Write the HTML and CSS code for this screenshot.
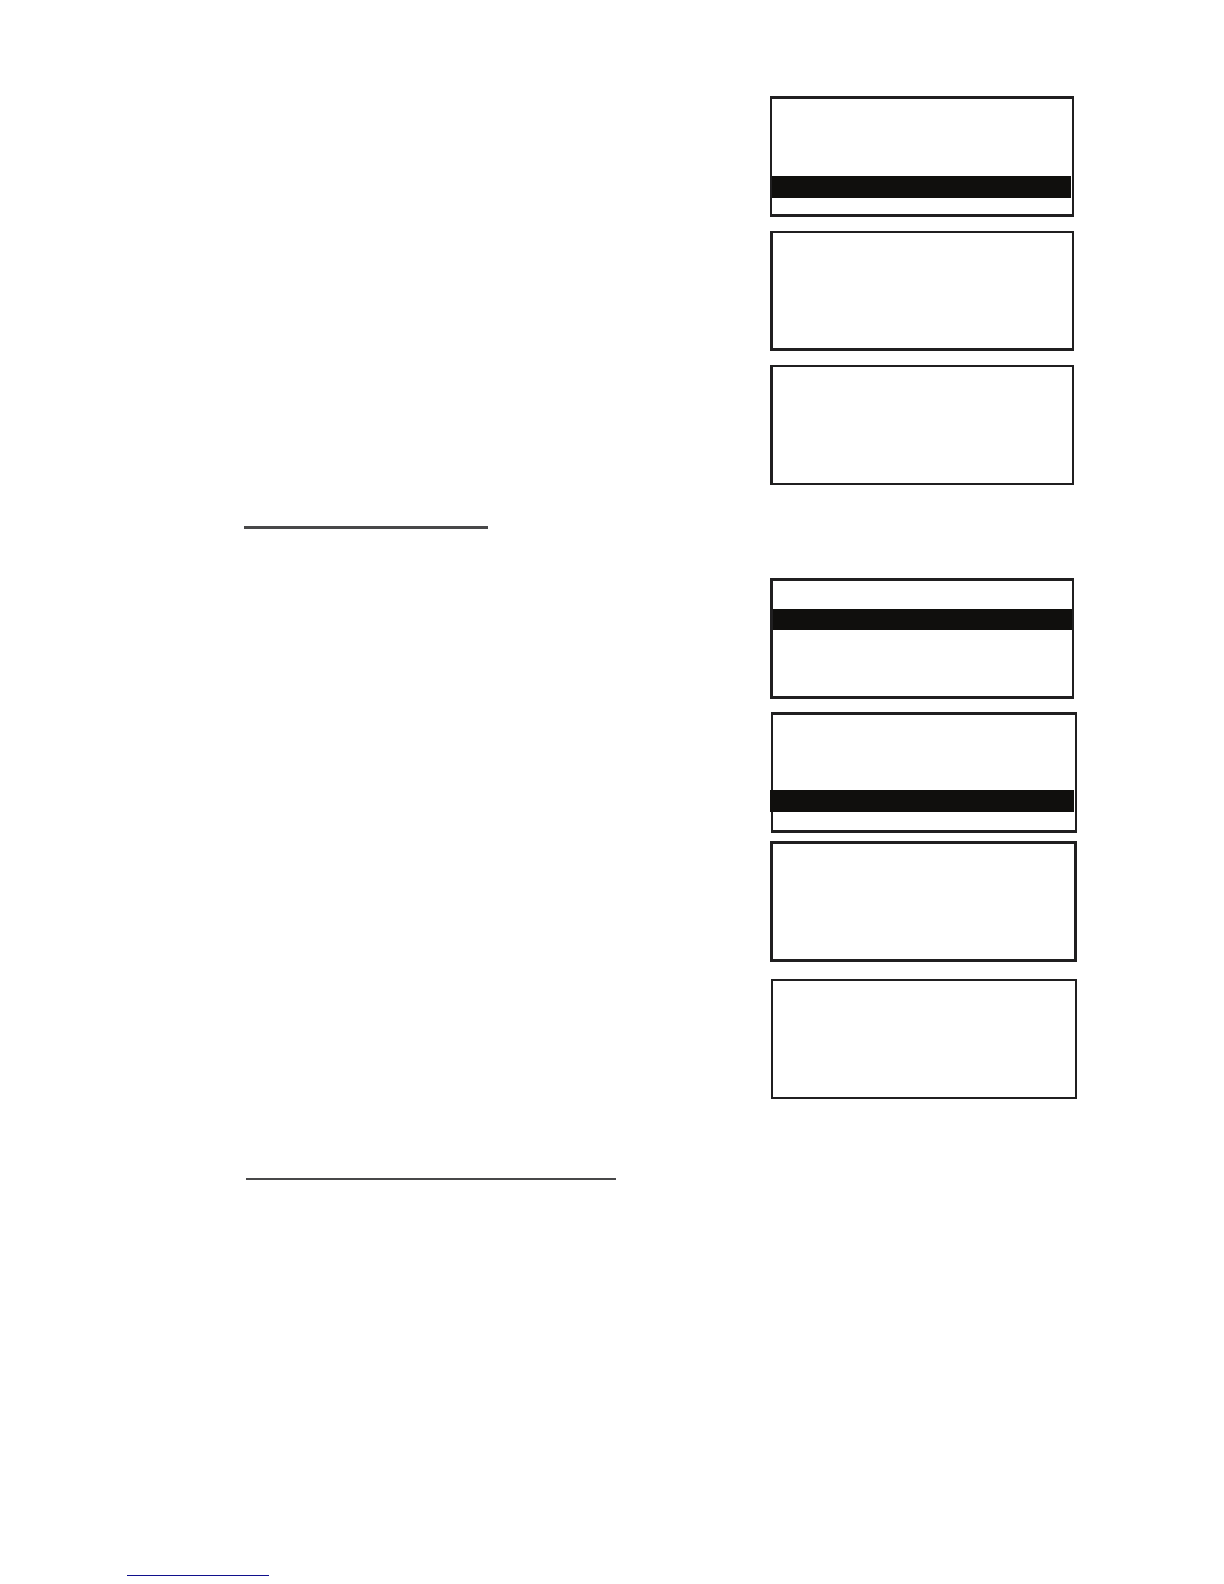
FILE: index.html
```html
<!DOCTYPE html>
<html lang="en">
<head>
<meta charset="utf-8">
<meta name="viewport" content="width=device-width, initial-scale=1">
<title>Display screens</title>
<link rel="stylesheet" href="styles.css">
</head>
<body>
<main class="page">
  <section class="screens">
    <div class="screen screen-slim-sides"><div class="bar bar-low"></div></div>
    <div class="screen screen-slim-top"></div>
    <div class="screen screen-slim-ends"></div>
  </section>
  <hr class="rule rule-heading">
  <section class="screens">
    <div class="screen"><div class="bar bar-high"></div></div>
    <div class="screen screen-slim-sides screen-wide"><div class="bar bar-low bar-overhang"></div></div>
    <div class="screen screen-full"></div>
    <div class="screen screen-thin screen-wide"></div>
  </section>
  <hr class="rule rule-subheading">
</main>
<footer class="footer">
  <hr class="rule rule-link">
</footer>
</body>
</html>
```

FILE: styles.css
```css
* {
  box-sizing: border-box;
}

body {
  margin: 0;
  min-height: 100vh;
  display: flex;
  flex-direction: column;
  justify-content: space-between;
  background: #fff;
  font-family: "Liberation Sans", Arial, sans-serif;
}

.page {
  padding: 96px 147px 0 244px;
}

.screens {
  width: 307px;
  max-width: 100%;
  margin-left: auto;
}

.screen {
  display: flow-root;
  min-height: 121px;
  margin: 0 3px 14px 0;
  border: 3px solid #201f20;
  border-right-width: 2px;
}

.screen-slim-sides {
  border-left-width: 2px;
}

.screen-slim-top {
  min-height: 120px;
  border-top-width: 2px;
}

.screen-slim-ends {
  min-height: 120px;
  margin-bottom: 0;
  border-top-width: 2px;
  border-bottom-width: 2px;
}

.screen-wide {
  margin: -1px 0 8px 1px;
}

.screen-full {
  margin: 0 0 18px;
  border-width: 3px;
}

.screen-thin {
  min-height: 120px;
  margin-bottom: 0;
  border-width: 2px;
}

.bar {
  height: 22px;
  background: #100f0d;
}

.bar-low {
  margin: 77px 1px 0 0;
}

.bar-high {
  height: 21px;
  margin-top: 28px;
}

.bar-overhang {
  margin: 75px 1px 0 -3px;
}

.rule {
  max-width: 100%;
  margin: 0;
  border: 0;
  background: #484849;
}

.rule-heading {
  width: 244px;
  height: 3px;
  margin: 41px 0 49px;
}

.rule-subheading {
  width: 370px;
  height: 2px;
  margin: 79px 0 0 2px;
}

.footer {
  padding: 0 127px 8px;
}

.rule-link {
  width: 142px;
  height: 1px;
  background: #10108c;
}
```
